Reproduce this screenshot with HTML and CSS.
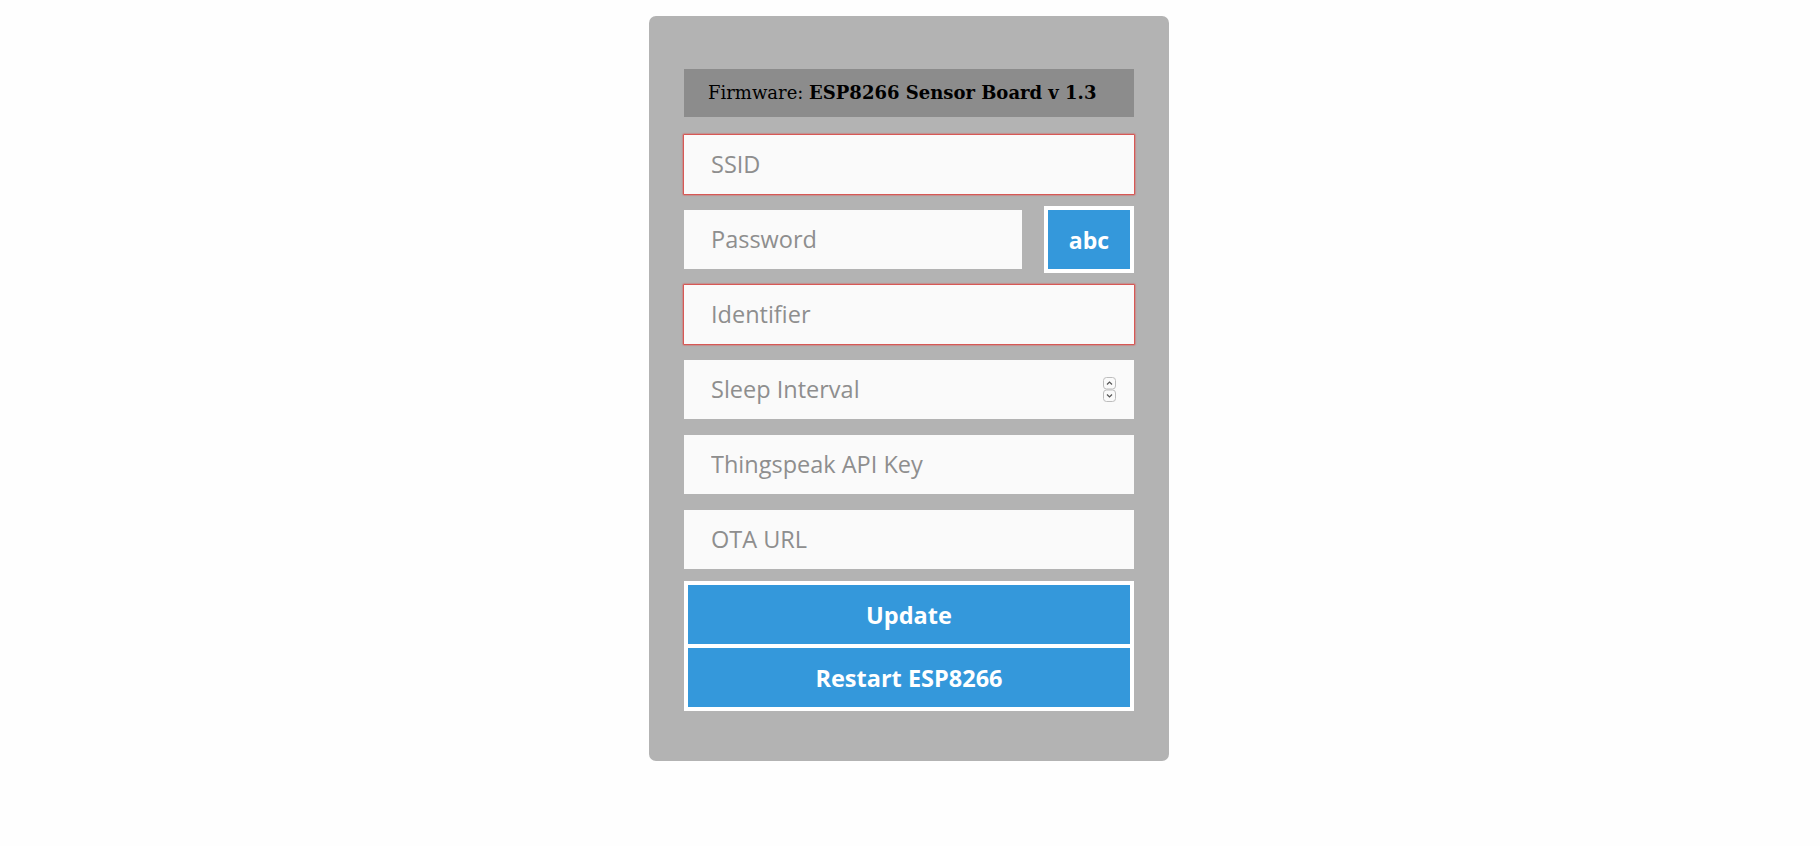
FILE: index.html
```html
<!DOCTYPE html>
<html lang="en">
<head>
<meta charset="utf-8">
<title>ESP8266 Sensor Board</title>
<link rel="stylesheet" href="styles.css">
</head>
<body>
<main class="card">
  <div class="fw">Firmware: <b>ESP8266 Sensor Board v 1.3</b></div>
  <input class="field invalid" type="text" placeholder="SSID">
  <div class="pw-row">
    <input class="field pw" type="password" placeholder="Password">
    <button class="abc" type="button">abc</button>
  </div>
  <input class="field invalid" type="text" placeholder="Identifier">
  <div class="num-wrap">
    <input class="field" type="text" placeholder="Sleep Interval">
    <svg class="spin" width="14" height="26" viewBox="0 0 14 26" aria-hidden="true">
      <rect x="0.5" y="0.5" width="12" height="11.5" rx="3" fill="#fafafa" stroke="#bdbdbd"/>
      <rect x="0.5" y="13" width="12" height="11.5" rx="3" fill="#fafafa" stroke="#bdbdbd"/>
      <path d="M4 7.5 L6.5 5 L9 7.5" fill="none" stroke="#555" stroke-width="1.2"/>
      <path d="M4 17.5 L6.5 20 L9 17.5" fill="none" stroke="#555" stroke-width="1.2"/>
    </svg>
  </div>
  <input class="field" type="text" placeholder="Thingspeak API Key">
  <input class="field" type="text" placeholder="OTA URL">
  <div class="btns">
    <button class="btn" type="button">Update</button>
    <button class="btn" type="button">Restart ESP8266</button>
  </div>
</main>
</body>
</html>
```

FILE: styles.css
```css
html, body {
  margin: 0;
  padding: 0;
  background: #fefefe;
}
body {
  font-family: "Open Sans", "Noto Sans", sans-serif;
}
.card {
  width: 450px;
  margin: 16px 0 0 calc(50% - 261px);
  padding: 53px 35px 50px;
  background: #b3b3b3;
  border-radius: 7px;
  display: flex;
  flex-direction: column;
}
.fw {
  height: 48px;
  line-height: 48px;
  background: #8c8c8c;
  padding-left: 24px;
  font-family: "DejaVu Serif", serif;
  font-size: 18px;
  color: #000;
  margin-bottom: 18px;
  white-space: nowrap;
}
.field {
  box-sizing: border-box;
  height: 59px;
  width: 100%;
  margin: 0 0 16px;
  padding: 0 0 2px 27px;
  border: 0;
  background: #fafafa;
  font-family: "Open Sans", "Noto Sans", sans-serif;
  font-size: 23.5px;
  color: #333;
  outline: none;
  display: block;
}
.field::placeholder {
  color: #8e8e8e;
  opacity: 1;
}
.invalid {
  box-shadow: 0 0 1.5px 1px #e53935;
}
.pw-row {
  display: flex;
  align-items: flex-start;
  margin-bottom: 16px;
}
.pw-row .field {
  margin: 0;
}
.pw {
  width: 338px;
  flex: none;
}
.abc {
  margin-left: 26px;
  width: 82px;
  height: 59px;
  border: 0;
  background: #3498db;
  color: #fff;
  font-family: "Open Sans", "Noto Sans", sans-serif;
  font-weight: 700;
  font-size: 23px;
  box-shadow: 0 0 0 4px #fff;
  padding: 0;
}
.num-wrap {
  position: relative;
}
.spin {
  position: absolute;
  right: 17px;
  top: 17px;
}
.btns {
  margin-top: -4px;
  background: #fff;
  padding: 4px;
  display: flex;
  flex-direction: column;
  gap: 4px;
}
.btn {
  height: 59px;
  border: 0;
  background: #3498db;
  color: #fff;
  font-family: "Open Sans", "Noto Sans", sans-serif;
  font-weight: 700;
  font-size: 23.5px;
  padding: 0;
}
```
